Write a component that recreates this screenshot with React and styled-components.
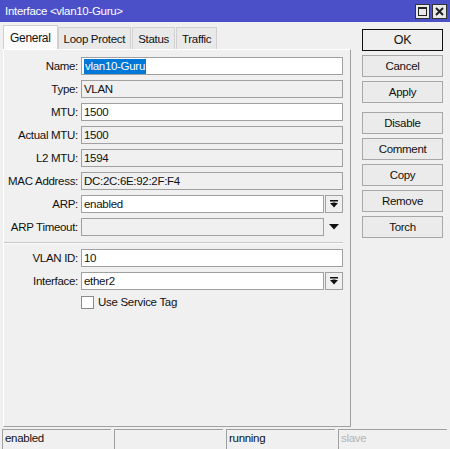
import React from "react";
import styled, { createGlobalStyle } from "styled-components";

const Global = createGlobalStyle`
  html, body { margin: 0; padding: 0; background: #f0f0f0; }
  body {
    font-family: "Liberation Sans", Arial, sans-serif;
    font-size: 11.5px;
    letter-spacing: -0.3px;
    color: #111;
  }
`;

const Window = styled.div`
  width: 450px;
  height: 449px;
  display: flex;
  flex-direction: column;
  background: #f0f0f0;
  overflow: hidden;
`;

const TitleBar = styled.div`
  height: 22px;
  flex: none;
  background: #4b50c9;
  display: flex;
  align-items: center;
  padding: 0 3px 0 5px;
  color: #fff;
`;

const TitleText = styled.div`
  flex: 1;
  padding-bottom: 1px;
`;

const WinButton = styled.div`
  width: 13px;
  height: 13px;
  border: 1px solid #333;
  background: #e8e8e8;
  margin-left: 2px;
  display: flex;
  align-items: center;
  justify-content: center;
`;

const Body = styled.div`
  flex: 1;
  display: flex;
  padding: 3px 0 0 3px;
`;

const LeftCol = styled.div`
  width: 348px;
  display: flex;
  flex-direction: column;
`;

const Tabs = styled.div`
  height: 24px;
  display: flex;
  align-items: flex-end;
`;

const Tab = styled.div`
  height: ${(p) => (p.active ? "24px" : "22px")};
  box-sizing: border-box;
  padding: 0 ${(p) => (p.active ? "6px" : "5px")};
  border: 1px solid #d0d0d0;
  border-bottom: none;
  margin-right: ${(p) => (p.active ? "0" : "1px")};
  background: ${(p) => (p.active ? "#fbfbfb" : "#e9e9e9")};
  display: flex;
  align-items: center;
  ${(p) => p.active && "font-size: 12px; padding-top: 1px;"}
`;

const Panel = styled.div`
  flex: 1;
  box-sizing: border-box;
  border-top: 1px solid #fff;
  border-left: 1px solid #fff;
  border-right: 1px solid #a0a0a0;
  border-bottom: 1px solid #a0a0a0;
  padding: 7px 7px 0 0;
  display: flex;
  flex-direction: column;
  gap: 5px;
`;

const Row = styled.div`
  display: flex;
  align-items: center;
  height: 18px;
`;

const Label = styled.div`
  width: 74px;
  text-align: right;
  padding-right: 3px;
  flex: none;
  white-space: nowrap;
`;

const Field = styled.div`
  flex: 1;
  height: 18px;
  box-sizing: border-box;
  border: 1px solid #a0a0a0;
  background: ${(p) => (p.editable ? "#fff" : "#f0f0f0")};
  display: flex;
  align-items: center;
  padding-left: 2px;
  white-space: nowrap;
  overflow: hidden;
`;

const Selected = styled.span`
  background: #0078d7;
  color: #fff;
  padding: 0 1px;
  line-height: 15px;
`;

const DropButton = styled.div`
  width: 18px;
  height: 18px;
  box-sizing: border-box;
  margin-left: 1px;
  border: ${(p) => (p.bare ? "none" : "1px solid #a0a0a0")};
  background: #f0f0f0;
  display: flex;
  align-items: center;
  justify-content: center;
  flex: none;
`;

const Separator = styled.div`
  height: 1px;
  background: #c8c8c8;
  border-bottom: 1px solid #fbfbfb;
  margin-top: 1px;
`;

const CheckRow = styled.div`
  display: flex;
  align-items: center;
  padding-left: 77px;
  height: 14px;
`;

const Box = styled.div`
  width: 13px;
  height: 13px;
  box-sizing: border-box;
  border: 1px solid #8a8a8a;
  background: #fff;
  margin-right: 4px;
`;

const ButtonCol = styled.div`
  width: 81px;
  margin-left: 11px;
  padding-top: 4px;
  display: flex;
  flex-direction: column;
  gap: 4px;
`;

const Button = styled.div`
  height: 22px;
  box-sizing: border-box;
  border: 1px solid ${(p) => (p.primary ? "#111" : "#a8a8a8")};
  background: ${(p) => (p.primary ? "#efefef" : "#ebebeb")};
  display: flex;
  align-items: center;
  justify-content: center;
  font-size: ${(p) => (p.primary ? "12.5px" : "11.5px")};
  margin-top: ${(p) => p.gapTop || "0"};
`;

const StatusBar = styled.div`
  height: 22px;
  flex: none;
  display: flex;
  gap: 3px;
  padding: 2px 3px 0 2px;
  box-sizing: border-box;
`;

const Cell = styled.div`
  flex: 1;
  box-sizing: border-box;
  border-top: 1px solid #a0a0a0;
  border-left: 1px solid #a0a0a0;
  padding: 2px 0 0 2px;
  color: ${(p) => (p.dim ? "#b4b4b4" : "#111")};
`;

const DropIcon = () => (
  <svg width="8" height="8" viewBox="0 0 8 8">
    <rect x="0" y="0" width="8" height="1.5" fill="#111" />
    <polygon points="0,3 8,3 4,7.5" fill="#111" />
    <rect x="2.5" y="2.5" width="3" height="1.5" fill="#111" />
  </svg>
);

const ArrowIcon = () => (
  <svg width="10" height="6" viewBox="0 0 10 6">
    <polygon points="0,0 10,0 5,5.5" fill="#111" />
  </svg>
);

const fields = [
  { label: "Name:", value: "vlan10-Guru", editable: true, selected: true },
  { label: "Type:", value: "VLAN" },
  { label: "MTU:", value: "1500", editable: true },
  { label: "Actual MTU:", value: "1500" },
  { label: "L2 MTU:", value: "1594" },
  { label: "MAC Address:", value: "DC:2C:6E:92:2F:F4" },
  { label: "ARP:", value: "enabled", editable: true, drop: true },
  { label: "ARP Timeout:", value: "", arrow: true },
];

const FormRow = ({ label, value, editable, selected, drop, arrow }) => (
  <Row>
    <Label>{label}</Label>
    <Field editable={editable}>{selected ? <Selected>{value}</Selected> : value}</Field>
    {drop && (
      <DropButton>
        <DropIcon />
      </DropButton>
    )}
    {arrow && (
      <DropButton bare>
        <ArrowIcon />
      </DropButton>
    )}
  </Row>
);

export default function App() {
  return (
    <Window>
      <Global />
      <TitleBar>
        <TitleText>Interface &lt;vlan10-Guru&gt;</TitleText>
        <WinButton>
          <svg width="9" height="9" viewBox="0 0 9 9">
            <rect x="0.5" y="0.5" width="8" height="8" fill="none" stroke="#222" />
            <rect x="0" y="0" width="9" height="2" fill="#222" />
          </svg>
        </WinButton>
        <WinButton>
          <svg width="9" height="9" viewBox="0 0 9 9">
            <path d="M1 1 L8 8 M8 1 L1 8" stroke="#222" strokeWidth="2" />
          </svg>
        </WinButton>
      </TitleBar>
      <Body>
        <LeftCol>
          <Tabs>
            <Tab active>General</Tab>
            <Tab>Loop Protect</Tab>
            <Tab>Status</Tab>
            <Tab>Traffic</Tab>
          </Tabs>
          <Panel>
            {fields.map((f) => (
              <FormRow key={f.label} {...f} />
            ))}
            <Separator />
            <FormRow label="VLAN ID:" value="10" editable />
            <FormRow label="Interface:" value="ether2" editable drop />
            <CheckRow>
              <Box />
              Use Service Tag
            </CheckRow>
          </Panel>
        </LeftCol>
        <ButtonCol>
          <Button primary>OK</Button>
          <Button>Cancel</Button>
          <Button>Apply</Button>
          <Button gapTop="5px">Disable</Button>
          <Button>Comment</Button>
          <Button>Copy</Button>
          <Button>Remove</Button>
          <Button>Torch</Button>
        </ButtonCol>
      </Body>
      <StatusBar>
        <Cell>enabled</Cell>
        <Cell />
        <Cell>running</Cell>
        <Cell dim>slave</Cell>
      </StatusBar>
    </Window>
  );
}
